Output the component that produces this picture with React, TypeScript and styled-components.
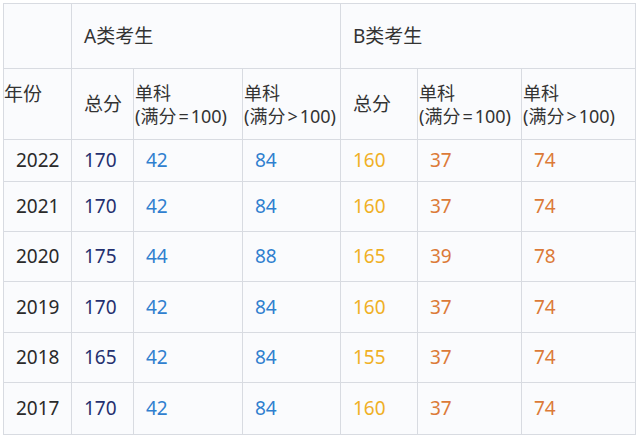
import React from 'react';
import styled, { createGlobalStyle, css } from 'styled-components';

const GlobalStyle = createGlobalStyle`
  html, body {
    margin: 0;
    padding: 0;
    background: #ffffff;
  }
  body {
    font-family: "Noto Sans", "Noto Sans CJK SC", sans-serif;
  }
`;

const Wrapper = styled.div`
  padding: 3px 0 0 3px;
`;

const Grid = styled.div`
  display: grid;
  grid-template-columns: 67px 61px 108px 97px 76px 103px 113px;
  grid-template-rows: 64px 70px 41px 49px 49px 50px 49px 51px;
  gap: 1px;
  padding: 1px;
  width: max-content;
  background: #d8dbe1;
`;

const tones = {
  year: '#2a2a2a',
  head: '#333333',
  aTotal: '#25306f',
  aSingle: '#2f7fcf',
  bTotal: '#f0b025',
  bSingle: '#dc7a38',
};

const Cell = styled.div<{ tone?: keyof typeof tones; span?: number; tight?: boolean; top?: boolean }>`
  background: #fafbfd;
  display: flex;
  align-items: center;
  padding-left: 12px;
  font-size: 19px;
  line-height: 23px;
  color: ${(p) => tones[p.tone || 'head']};
  ${(p) => (p.span ? css`grid-column: span ${p.span};` : null)};
  ${(p) =>
    p.tight &&
    css`
      padding-left: 1px;
      padding-top: 1px;
      font-size: 18px;
    `};
  ${(p) =>
    p.top &&
    css`
      align-items: flex-start;
      padding-left: 0;
      padding-top: 14px;
    `};
`;

const SubHead = styled.div`
  white-space: nowrap;
  line-height: 23px;
`;

const Sign = styled.span`
  margin: 0 2px;
`;

const rows = [
  ['2022', '170', '42', '84', '160', '37', '74'],
  ['2021', '170', '42', '84', '160', '37', '74'],
  ['2020', '175', '44', '88', '165', '39', '78'],
  ['2019', '170', '42', '84', '160', '37', '74'],
  ['2018', '165', '42', '84', '155', '37', '74'],
  ['2017', '170', '42', '84', '160', '37', '74'],
];

const rowTones: (keyof typeof tones)[] = ['year', 'aTotal', 'aSingle', 'aSingle', 'bTotal', 'bSingle', 'bSingle'];

const Single = ({ sign }: { sign: string }) => (
  <Cell tight>
    <SubHead>
      单科
      <br />
      (满分<Sign>{sign}</Sign>100)
    </SubHead>
  </Cell>
);

export default function App() {
  return (
    <>
      <GlobalStyle />
      <Wrapper>
        <Grid>
          <Cell />
          <Cell span={3}>A类考生</Cell>
          <Cell span={3}>B类考生</Cell>

          <Cell top>年份</Cell>
          <Cell>总分</Cell>
          <Single sign="=" />
          <Single sign=">" />
          <Cell>总分</Cell>
          <Single sign="=" />
          <Single sign=">" />

          {rows.map((row) =>
            row.map((v, i) => (
              <Cell key={row[0] + i} tone={rowTones[i]}>
                {v}
              </Cell>
            ))
          )}
        </Grid>
      </Wrapper>
    </>
  );
}
